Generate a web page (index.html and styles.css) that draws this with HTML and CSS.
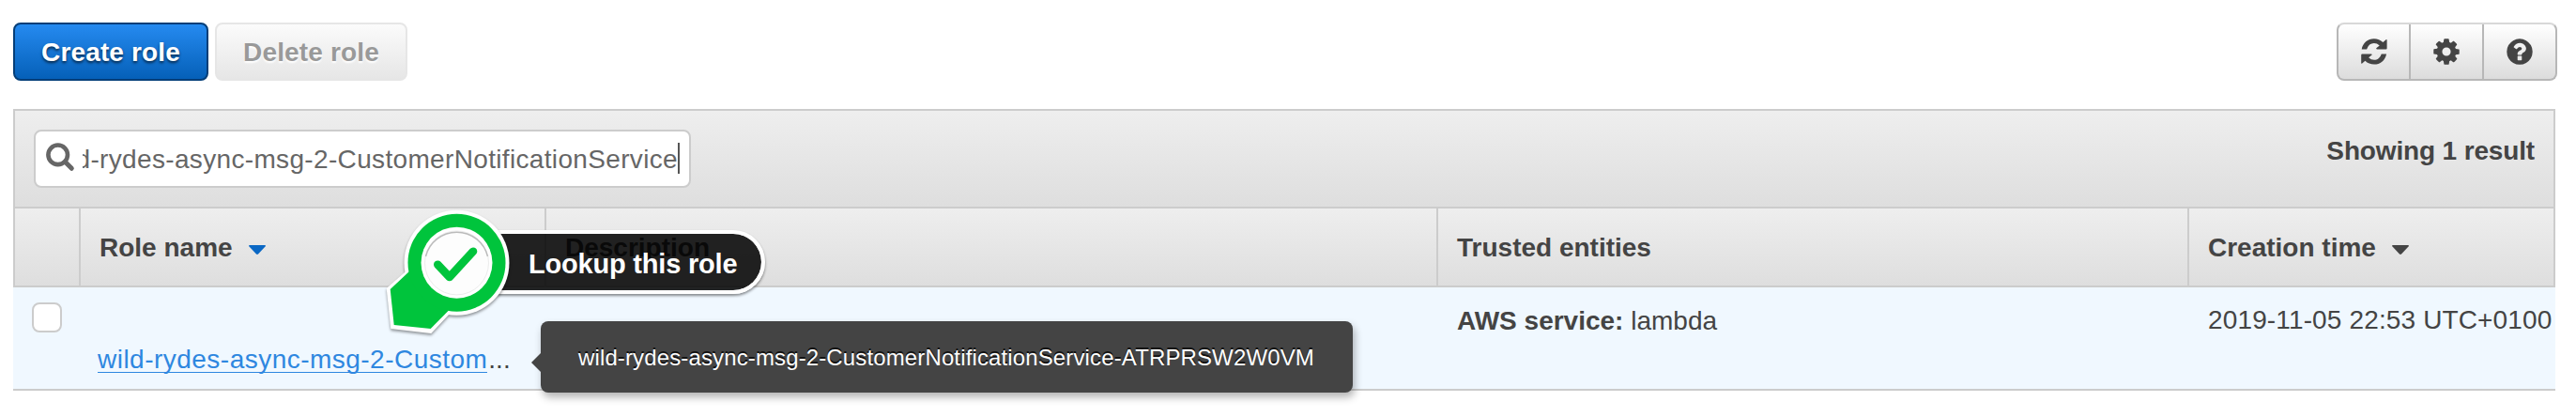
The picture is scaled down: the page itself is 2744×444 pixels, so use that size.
FILE: index.html
```html
<!DOCTYPE html>
<html lang="en">
<head>
<meta charset="utf-8">
<title>Roles</title>
<link rel="stylesheet" href="styles.css">
</head>
<body>
<div class="toolbar">
  <button class="btn btn-primary">Create role</button>
  <button class="btn btn-disabled" disabled>Delete role</button>
  <div class="btn-group">
    <button class="icon-btn" aria-label="Refresh"><svg width="28" height="28" viewBox="0 0 28 28"><path d="M.7 11.400C1.800 4.800 7.300.2 13.800.2C17.500.2 20.800 1.500 23.400 4L26.600 1.200Q27.600.6 27.600 1.800V10.400Q27.600 11.400 26.600 11.400H17Q15.400 11.200 16.600 10L19.700 7.500C18 5.800 16 5 13.800 5C10.200 5 7.500 7.200 6.100 11.400Z"/><path transform="rotate(180 13.900 13.900)" d="M.7 11.400C1.800 4.800 7.300.2 13.800.2C17.500.2 20.800 1.500 23.400 4L26.600 1.200Q27.600.6 27.600 1.800V10.400Q27.600 11.400 26.600 11.400H17Q15.400 11.200 16.600 10L19.700 7.500C18 5.800 16 5 13.800 5C10.200 5 7.500 7.200 6.100 11.400Z"/></svg></button>
    <button class="icon-btn" aria-label="Settings"><svg width="32" height="32" viewBox="0 0 1792 1792"><path d="M1152 896q0-106-75-181t-181-75-181 75-75 181 75 181 181 75 181-75 75-181zm512-109v222q0 12-8 23t-20 13l-185 28q-19 54-39 91 35 50 107 138 10 12 10 25t-9 23q-27 37-99 108t-94 71q-12 0-26-9l-138-108q-44 23-91 38-16 136-29 186-7 28-36 28h-222q-14 0-24.500-8.500t-11.500-21.500l-28-184q-49-16-90-37l-141 107q-10 9-25 9-14 0-25-11-126-114-165-168-7-10-7-23 0-12 8-23 15-21 51-66.500t54-70.500q-27-50-41-99l-183-27q-13-2-21-12.500t-8-23.500v-222q0-12 8-23t19-13l186-28q14-46 39-92-40-57-107-138-10-12-10-24 0-10 9-23 26-36 98.500-107.500t94.500-71.500q13 0 26 10l138 107q44-23 91-38 16-136 29-186 7-28 36-28h222q14 0 24.500 8.500t11.500 21.500l28 184q49 16 90 37l142-107q9-9 24-9 13 0 25 10 129 119 165 170 7 8 7 22 0 12-8 23-15 21-51 66.500t-54 70.500q26 50 41 98l183 28q13 2 21 12.500t8 23.500z"/></svg></button>
    <button class="icon-btn" aria-label="Help"><svg width="32" height="32" viewBox="0 0 1792 1792"><path d="M1024 1376v-192q0-14-9-23t-23-9h-192q-14 0-23 9t-9 23v192q0 14 9 23t23 9h192q14 0 23-9t9-23zm256-672q0-88-55.500-163t-138.500-116-170-41q-243 0-371 213-15 24 8 42l132 100q7 6 19 6 16 0 25-12 53-68 86-92 34-24 86-24 48 0 85.500 26t37.500 59q0 38-20 61t-68 45q-63 28-115.500 86.500t-52.500 125.500v36q0 14 9 23t23 9h192q14 0 23-9t9-23q0-19 21.500-49.500t54.500-49.500q32-18 49-28.500t46-35 44.500-48 28-60.500 12.500-81zm384 192q0 209-103 385.500t-279.500 279.500-385.500 103-385.500-103-279.500-279.500-103-385.500 103-385.500 279.500-279.500 385.500-103 385.500 103 279.500 279.500 103 385.500z"/></svg></button>
  </div>
</div>

<div class="panel">
  <div class="filter-bar">
    <div class="search">
      <svg class="search-icon" width="32" height="32" viewBox="0 0 32 32"><circle cx="12.700" cy="12.800" r="10.300" fill="none" stroke="#666" stroke-width="4.600"/><path d="M20.300 20.300L27.300 27.300" stroke="#666" stroke-width="5" stroke-linecap="round"/></svg>
      <div class="search-text">wild-rydes-async-msg-2-CustomerNotificationService</div>
      <span class="caret"></span>
    </div>
    <div class="count">Showing 1 result</div>
  </div>
  <div class="row head">
    <div class="cell"></div>
    <div class="cell">Role name<svg class="sort" width="18" height="10" viewBox="0 0 18 10"><path d="M0 1Q0 0 1 0H17Q18 0 18 1L10 9.500Q9 10.400 8 9.500Z" fill="#0a67c4"/></svg></div>
    <div class="cell">Description</div>
    <div class="cell">Trusted entities</div>
    <div class="cell">Creation time<svg class="sort" width="18" height="10" viewBox="0 0 18 10"><path d="M0 1Q0 0 1 0H17Q18 0 18 1L10 9.500Q9 10.400 8 9.500Z" fill="#444"/></svg></div>
  </div>
  <div class="row body">
    <div class="check-cell"><span class="checkbox"></span></div>
    <div class="name-cell"><a class="link">wild-rydes-async-msg-2-Custom</a><span class="dots">...</span></div>
    <div></div>
    <div class="data-cell"><b>AWS service:</b> lambda</div>
    <div class="data-cell date">2019-11-05 22:53 UTC+0100</div>
  </div>
</div>

<div class="tooltip">wild-rydes-async-msg-2-CustomerNotificationService-ATRPRSW2W0VM</div>

<div class="callout">Lookup this role</div>
<svg class="marker" width="150" height="150" viewBox="400 214 150 150">
  <g class="marker-shape">
    <path d="M434 287.500L411.700 307L416.300 350L459.300 355L478.500 334.500Z" fill="#fff"/>
    <circle cx="486.500" cy="279.700" r="56" fill="#fff"/>
  </g>
  <path d="M436.500 288.500L415.700 308L419.700 346L458.700 350L477.500 331Z" fill="#00c43c"/>
  <circle cx="486.500" cy="279.700" r="52" fill="#00c43c"/>
  <circle cx="486.500" cy="279.700" r="38" fill="#fff"/>
  <circle cx="486.500" cy="279.900" r="34" fill="#fdfdfd" stroke="#ececec" stroke-width="1"/>
  <path d="M453.500 273A34 34 0 0 1 519.500 273" fill="none" stroke="#bbb" stroke-width="1.500"/>
  <path d="M466.300 281.700L478.800 295L504 267.700" fill="none" stroke="#00c43c" stroke-width="8.600" stroke-linecap="round" stroke-linejoin="round"/>
</svg>
</body>
</html>
```
FILE: styles.css
```css
* { box-sizing: border-box; }

body {
  margin: 0;
  padding: 24px 22px 0 14px;
  height: 444px;
  overflow: hidden;
  position: relative;
  background: #fff;
  color: #444;
  font: 28px/32px "Liberation Sans", Arial, sans-serif;
}

.toolbar {
  display: flex;
  gap: 7px;
  height: 62px;
  margin-right: -2px;
}

.btn {
  height: 62px;
  padding: 2px 0 0;
  border: 2px solid;
  border-radius: 8px;
  font: bold 28px/32px "Liberation Sans", Arial, sans-serif;
  letter-spacing: .15px;
  text-align: center;
  white-space: nowrap;
}

.btn-primary {
  width: 208px;
  border-color: #043e78;
  background: linear-gradient(#258af0, #0560b8);
  color: #fff;
  text-shadow: 0 2px 3px rgba(0, 0, 0, .65);
}

.btn-disabled {
  width: 205px;
  border-color: #e6e6e6;
  background: linear-gradient(#fbfbfb, #e6e6e6);
  color: #999;
  text-shadow: 0 2px 2px #fff;
}

.btn-group {
  display: grid;
  grid-template-columns: 75px 78px 78px;
  width: 235px;
  margin-left: auto;
  border: 2px solid #b7b7b7;
  border-top-color: #d8d8d8;
  border-radius: 8px;
  background: linear-gradient(#fff, #dcdcdc);
}

.icon-btn {
  display: flex;
  align-items: center;
  justify-content: center;
  padding: 0;
  border: 0;
  background: none;
  fill: #444;
}

.icon-btn + .icon-btn { border-left: 2px solid #b7b7b7; }

.panel { margin-top: 30px; }

.filter-bar {
  display: flex;
  justify-content: space-between;
  height: 104px;
  padding: 20px 20px 0;
  border: 2px solid #ccc;
  border-bottom: 0;
  background: linear-gradient(#eee, #dedede);
}

.search {
  display: flex;
  width: 700px;
  height: 62px;
  padding: 12px 11px;
  border: 2px solid #ccc;
  border-radius: 8px;
  background: #fff;
  color: #666;
}

.search-icon { flex: none; }

.search-text {
  display: flex;
  flex: none;
  justify-content: flex-end;
  width: 634px;
  margin-left: 7px;
  padding-top: 2px;
  overflow: hidden;
  letter-spacing: .34px;
  white-space: nowrap;
}

.caret {
  flex: none;
  width: 2px;
  height: 33px;
  background: #555;
}

.count {
  padding-top: 7px;
  font-weight: bold;
  letter-spacing: -.15px;
}

.row {
  display: grid;
  grid-template-columns: 72px 496px 950px 800px 390px;
}

.head {
  height: 86px;
  border-top: 2px solid #ccc;
  border-bottom: 2px solid #ccc;
  background: linear-gradient(#eee, #dedede);
  font-weight: bold;
}

.cell {
  padding: 26px 0 0 20px;
  border-right: 2px solid #ccc;
}

.cell:first-child { border-left: 2px solid #ccc; }

.sort {
  margin-left: 17px;
  vertical-align: 2px;
}

.body {
  height: 110px;
  border-bottom: 2px solid #ccc;
  background: #f0f8ff;
}

.check-cell { padding: 16px 0 0 20px; }

.checkbox {
  display: block;
  width: 32px;
  height: 32px;
  border: 2px solid #ccc;
  border-radius: 8px;
  background: #fff;
}

.name-cell {
  padding: 61px 0 0 18px;
  white-space: nowrap;
}

.link {
  display: inline-block;
  height: 28px;
  border-bottom: 1px solid #2e87e0;
  color: #2e87e0;
  letter-spacing: .48px;
  line-height: 28px;
}

.dots { margin-left: 1px; }

.data-cell {
  padding: 20px 0 0 20px;
  white-space: nowrap;
}

.date {
  padding-top: 19px;
  letter-spacing: .14px;
}

.tooltip {
  position: absolute;
  left: 576px;
  top: 342px;
  width: 865px;
  height: 76px;
  padding: 23px 0 0 40px;
  border-radius: 8px;
  background: #444;
  box-shadow: 2px 5px 9px rgba(0, 0, 0, .3);
  color: #fff;
  font-size: 24px;
  letter-spacing: .13px;
  text-shadow: 0 -2px 0 #111;
  white-space: nowrap;
}

.tooltip::before {
  content: "";
  position: absolute;
  left: -10px;
  top: 34px;
  border: solid transparent;
  border-width: 10px 10px 10px 0;
  border-right-color: #444;
}

.callout {
  position: absolute;
  left: 520px;
  top: 245px;
  width: 295px;
  height: 68px;
  padding: 16px 0 0 43px;
  border: 4px solid #fff;
  border-left: 0;
  border-radius: 0 34px 34px 0;
  background: rgba(0, 0, 0, .86);
  background-clip: padding-box;
  box-shadow: 0 2px 3px rgba(0, 0, 0, .45);
  color: #fff;
  font-size: 29px;
  font-weight: bold;
  letter-spacing: -.2px;
  white-space: nowrap;
}

.marker {
  position: absolute;
  left: 400px;
  top: 214px;
}

.marker-shape { filter: drop-shadow(0 2px 1.5px rgba(0, 0, 0, .4)); }
```
